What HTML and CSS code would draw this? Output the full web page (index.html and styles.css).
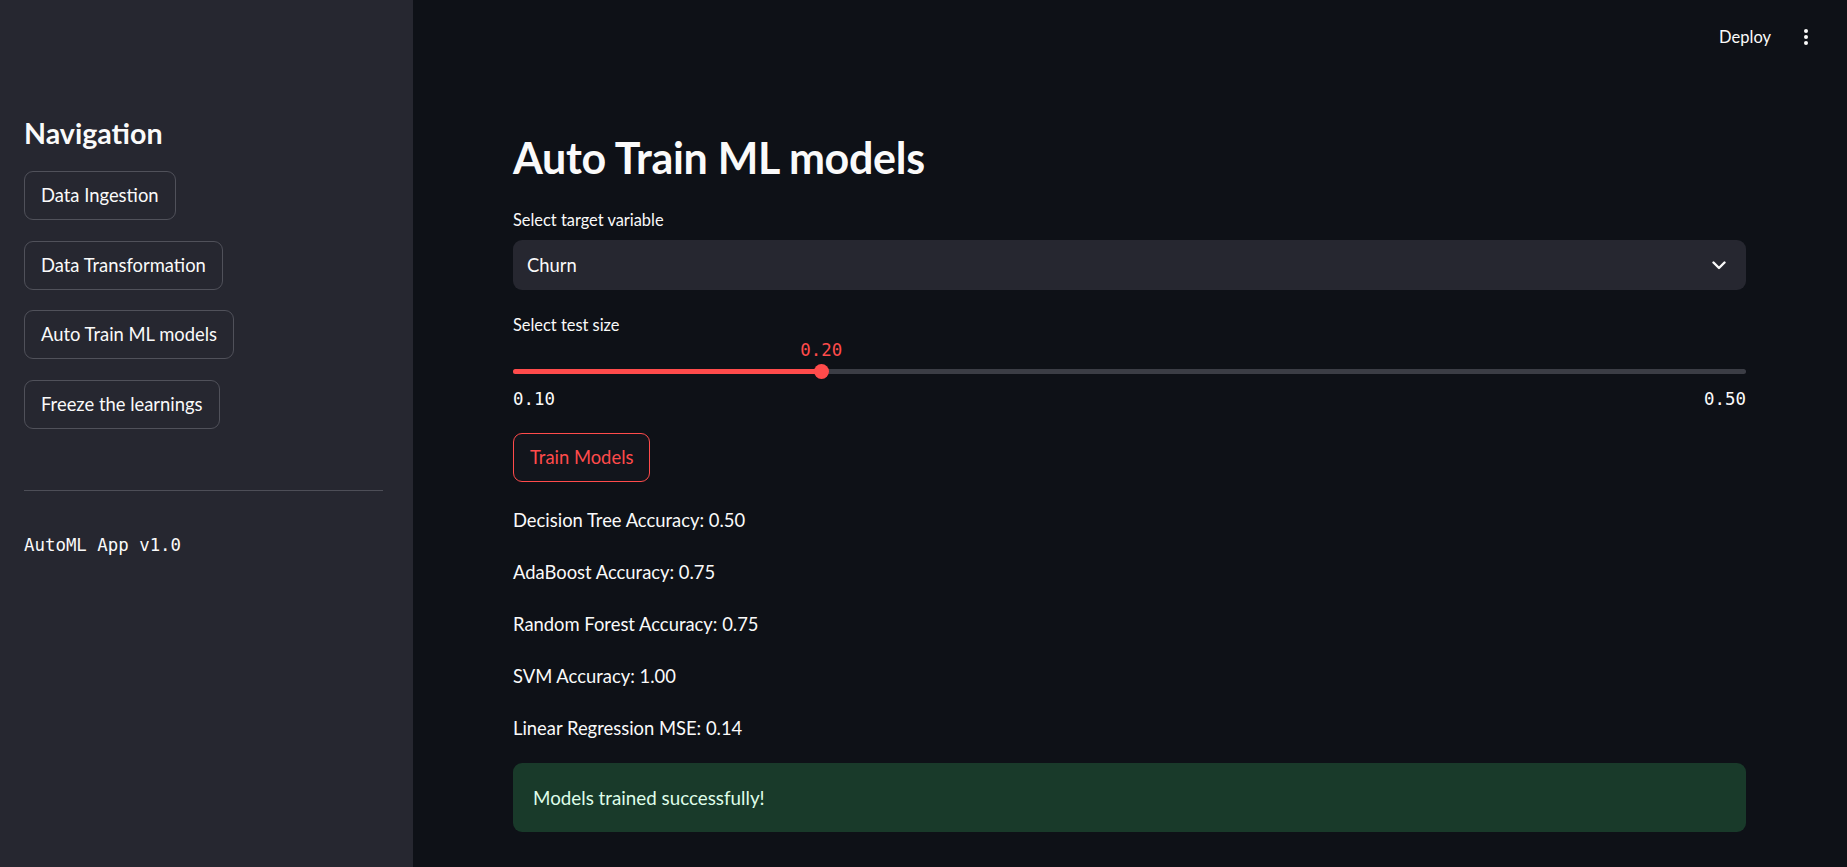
FILE: index.html
```html
<!DOCTYPE html>
<html lang="en">
<head>
<meta charset="utf-8">
<title>Auto Train ML models</title>
<link rel="stylesheet" href="styles.css">
</head>
<body>
<div class="app">
  <aside class="sidebar">
    <h2 class="nav-title">Navigation</h2>
    <div class="nav-buttons">
      <button class="nav-btn">Data Ingestion</button>
      <button class="nav-btn">Data Transformation</button>
      <button class="nav-btn">Auto Train ML models</button>
      <button class="nav-btn">Freeze the learnings</button>
    </div>
    <hr class="divider">
    <div class="version">AutoML App v1.0</div>
  </aside>
  <main class="main">
    <header class="topbar">
      <span class="deploy">Deploy</span>
      <span class="kebab"><i></i><i></i><i></i></span>
    </header>
    <section class="content">
      <h1 class="title">Auto Train ML models</h1>
      <div class="field-label">Select target variable</div>
      <div class="select">
        <span class="select-value">Churn</span>
        <svg class="chevron" viewBox="0 0 14 9" width="14" height="9"><path d="M1.5 1.5l5.5 5.5 5.5-5.5" fill="none" stroke="#fafafa" stroke-width="2.4" stroke-linecap="round" stroke-linejoin="round"/></svg>
      </div>
      <div class="field-label label-gap">Select test size</div>
      <div class="slider">
        <div class="slider-value-row"><span class="slider-value" style="left:25%">0.20</span></div>
        <div class="track-area">
          <div class="track"><div class="fill" style="width:25%"></div></div>
          <div class="thumb" style="left:25%"></div>
        </div>
        <div class="slider-minmax"><span>0.10</span><span>0.50</span></div>
      </div>
      <button class="train-btn">Train Models</button>
      <div class="results">
        <p>Decision Tree Accuracy: 0.50</p>
        <p>AdaBoost Accuracy: 0.75</p>
        <p>Random Forest Accuracy: 0.75</p>
        <p>SVM Accuracy: 1.00</p>
        <p>Linear Regression MSE: 0.14</p>
      </div>
      <div class="success">Models trained successfully!</div>
    </section>
  </main>
</div>
</body>
</html>
```

FILE: styles.css
```css
* { box-sizing: border-box; }
html, body { margin: 0; padding: 0; height: 100%; }
body {
  background: #0e1117;
  color: #fafafa;
  font-family: "Lato", "Liberation Sans", sans-serif;
  font-size: 18.4px;
  overflow: hidden;
}
.app { display: flex; height: 867px; }

.sidebar {
  width: 413px;
  flex: 0 0 413px;
  background: #262730;
  padding: 113px 30px 0 24px;
  display: flex;
  flex-direction: column;
  align-items: flex-start;
}
.nav-title {
  margin: 0;
  font-size: 28.6px;
  font-weight: 700;
  line-height: 40px;
  height: 40px;
}
.nav-buttons {
  margin-top: 18px;
  display: flex;
  flex-direction: column;
  align-items: flex-start;
  gap: 20.5px;
}
.nav-btn {
  height: 49px;
  padding: 0 16px;
  border: 1px solid #50515a;
  border-radius: 9px;
  background: #262730;
  color: #fafafa;
  font-family: inherit;
  font-size: 18.4px;
  line-height: 47px;
}
.divider {
  align-self: stretch;
  margin: 61.5px 0 0 0;
  border: 0;
  border-top: 1px solid #4d4e57;
  height: 0;
}
.version {
  margin-top: 42px;
  font-family: "DejaVu Sans Mono", "Liberation Mono", monospace;
  font-size: 17.4px;
  line-height: 24px;
}

.main { flex: 1; display: flex; flex-direction: column; min-width: 0; }
.topbar {
  height: 73px;
  display: flex;
  align-items: center;
  justify-content: flex-end;
  padding-right: 39px;
  gap: 33px;
}
.deploy { font-size: 16.5px; line-height: 24px; }
.kebab { display: flex; flex-direction: column; gap: 2px; }
.kebab i { display: block; width: 4px; height: 4px; border-radius: 50%; background: #fafafa; }

.content {
  padding: 55px 101px 0 100px;
  display: flex;
  flex-direction: column;
}
.title {
  margin: 0;
  font-size: 43px;
  font-weight: 700;
  line-height: 60px;
  height: 60px;
  letter-spacing: -0.3px;
}
.field-label {
  margin-top: 20px;
  font-size: 16.4px;
  line-height: 24px;
  height: 24px;
}
.field-label.label-gap { margin-top: 23px; }
.select {
  margin-top: 8px;
  height: 50px;
  background: #262730;
  border-radius: 9px;
  display: flex;
  align-items: center;
  justify-content: space-between;
  padding: 0 20px 0 14px;
}
.select-value { font-size: 18.4px; }
.chevron { display: block; }

.slider { margin-top: 2px; display: flex; flex-direction: column; }
.slider-value-row { position: relative; height: 22px; }
.slider-value {
  position: absolute;
  top: 0;
  transform: translateX(-50%);
  font-family: "DejaVu Sans Mono", "Liberation Mono", monospace;
  font-size: 17.4px;
  line-height: 22px;
  color: #ff4b4b;
}
.track-area { position: relative; height: 20px; display: flex; align-items: center; }
.track { width: 100%; height: 5px; border-radius: 3px; background: #3b3d45; overflow: hidden; }
.fill { height: 100%; background: #ff4b4b; }
.thumb {
  position: absolute;
  top: 50%;
  width: 15px;
  height: 15px;
  margin: -7.5px 0 0 -7.5px;
  border-radius: 50%;
  background: #ff4b4b;
}
.slider-minmax {
  margin-top: 7px;
  height: 22px;
  display: flex;
  justify-content: space-between;
  font-family: "DejaVu Sans Mono", "Liberation Mono", monospace;
  font-size: 17.4px;
  line-height: 22px;
}

.train-btn {
  align-self: flex-start;
  margin-top: 23px;
  height: 49px;
  padding: 0 16px;
  border: 1px solid #ff4b4b;
  border-radius: 9px;
  background: #12151c;
  color: #ff4b4b;
  font-family: inherit;
  font-size: 18.4px;
  line-height: 47px;
}
.results {
  margin-top: 24.5px;
  display: flex;
  flex-direction: column;
  gap: 26px;
}
.results p { margin: 0; height: 26px; line-height: 26px; font-size: 18.4px; }
.success {
  margin-top: 22.5px;
  height: 69px;
  background: #193a2a;
  border-radius: 9px;
  color: #dffde9;
  padding: 0 20px;
  display: flex;
  align-items: center;
  font-size: 18.8px;
}
```
